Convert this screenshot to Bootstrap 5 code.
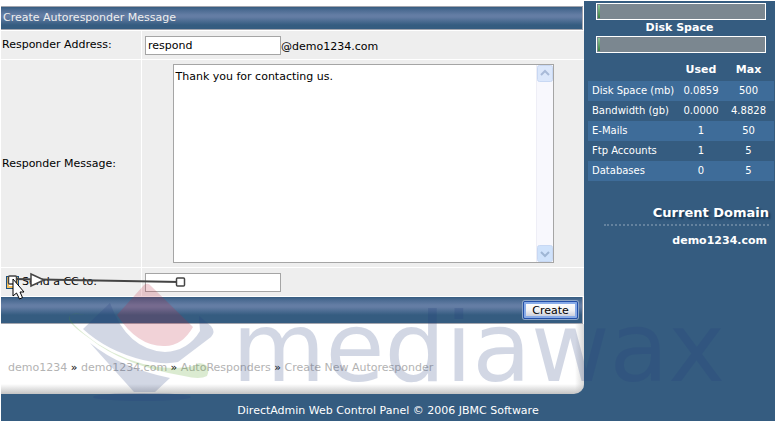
<!DOCTYPE html>
<html lang="en">
<head>
<meta charset="utf-8">
<meta name="viewport" content="width=device-width, initial-scale=1">
<title>Create Autoresponder Message</title>
<link href="https://cdn.jsdelivr.net/npm/bootstrap@5.3.0/dist/css/bootstrap.min.css" rel="stylesheet">
<style>
body{font:11px/14px "DejaVu Sans",Verdana,sans-serif;color:#000;background:#fff}
.page-shell{background:#355c80;min-height:calc(100vh - 2px);margin:1px;overflow:hidden}
.main-pane{background:linear-gradient(to top,#c4c4c4,#fff 10px);border-bottom-right-radius:10px;padding-top:5px}
.crumb-pane{height:70px;padding-left:7px;padding-top:18px;border-bottom-right-radius:10px;background:linear-gradient(to left,rgba(190,190,190,.6),rgba(255,255,255,0) 9px)}
.bar{background:linear-gradient(#355c80,#4b6b92 3px,#647da4 8px,#647da4 10px,#355c80 18px);border:solid #a3a5ae;border-width:0 1px 1px 0;margin-right:1px}
.bar-title{height:24px;border-top-width:1px;color:#eee;padding:0 2px}
.bar-actions{height:27px;padding-right:4px}
.form-rows{display:grid;grid-template-columns:140px 1fr;gap:1px;padding:1px 0;background:#fff}
.form-rows>div{background:#eee;padding:0 3px}
.form-rows>div:nth-child(odd){padding-left:1px}
.r-short{min-height:28px}
.field{width:136px;height:19px;border:1px solid #a5a5a5;padding:0 2px;font-size:11px;line-height:14px;background:#fff}
.msg{width:381px;height:199px;border:1px solid #a5a5a5;background:#fff}
.msg textarea{border:0;resize:none;outline:0;padding:5px 2px;font-size:11px;line-height:14px;overflow:hidden}
.scroll{width:17px;background:#f8f8fd;border-left:1px solid #eeeef6}
.cc-box{appearance:none;width:13px;height:13px;border:1px solid #1c5180;background:#fff;box-shadow:inset 0 0 0 2px #f4c05e;margin:0 3px 0 4px}
.create-btn{width:55px;height:18px;padding:0;font-size:11px;line-height:13px;color:#000;border:1px solid #2450a8;border-radius:2px;background:linear-gradient(#fff,#f3f3f5 8px,#c1c5d5);box-shadow:inset 0 0 0 2px #88abe8,0 0 0 1px #8ea6c6}
.crumb-pane a{color:#b3b3b3;text-decoration:none}
.side{width:191px;color:#fff;padding-top:2px}
.meter-box{height:17px;border:1px solid #fff;background:#7b8790;margin:0 9px 0 12px;padding:1px}
.meter-box div{height:100%;width:2px;background:linear-gradient(#8fc59a,#3c8243)}
.meter-name{line-height:16px}
.stats{width:calc(100% - 5px);margin:6px 1px 0 4px;font-size:10px;table-layout:fixed}
.stats th,.stats td{height:20px;padding:0;text-align:center;white-space:nowrap;color:#fff}
.stats thead th{font-size:11px;height:22px}
.stats tbody th{font-weight:400;text-align:left;padding-left:4px}
.stats tbody tr:nth-child(odd){background:#3e6c99}
.c-label{width:91px}.c-used{width:44px}
.dom-title{font-size:13px;line-height:18px;text-shadow:2px 2px 2px #173550;border-bottom:2px dotted #64829e;margin:23px 6px 0 20px;padding-bottom:2px}
.foot{color:#fff;height:27px;padding-top:10px}
.overlay{left:0;top:0;pointer-events:none}
</style>
<script src="https://cdn.jsdelivr.net/npm/bootstrap@5.3.0/dist/js/bootstrap.bundle.min.js"></script>
</head>
<body>
<div class="page-shell position-relative">
  <div class="d-flex align-items-start">
    <main class="main-pane flex-grow-1">
      <form>
        <div class="bar bar-title d-flex align-items-center">Create Autoresponder Message</div>
        <div class="form-rows">
          <div class="r-short d-flex align-items-center"><label for="addr">Responder Address:</label></div>
          <div class="r-short d-flex align-items-center"><input class="field" id="addr" type="text" value="respond"><span class="pt-1">@demo1234.com</span></div>
          <div class="d-flex align-items-center"><label for="msg">Responder Message:</label></div>
          <div class="d-flex justify-content-center py-1">
            <div class="msg d-flex">
              <textarea id="msg" class="flex-grow-1">Thank you for contacting us.</textarea>
              <div class="scroll d-flex flex-column justify-content-between">
                <svg width="16" height="17" viewBox="0 0 16 17"><rect x=".5" y=".5" width="15" height="16" rx="2" fill="#dbe7fb" stroke="#c8d8f3"/><path d="M4 10l4-4 4 4" fill="none" stroke="#a8bad8" stroke-width="2"/></svg>
                <svg width="16" height="17" viewBox="0 0 16 17"><rect x=".5" y=".5" width="15" height="16" rx="2" fill="#cfe2fb" stroke="#c8d8f3"/><path d="M4 7l4 4 4-4" fill="none" stroke="#9fb6d4" stroke-width="2"/></svg>
              </div>
            </div>
          </div>
          <div class="r-short d-flex align-items-center"><input type="checkbox" class="cc-box" id="cc"><label for="cc">Send a CC to:</label></div>
          <div class="r-short d-flex align-items-center"><input class="field" type="text" aria-label="CC address"></div>
        </div>
        <div class="bar bar-actions d-flex align-items-center justify-content-end"><button type="submit" class="create-btn">Create</button></div>
      </form>
      <nav class="crumb-pane d-flex align-items-center" aria-label="Breadcrumb"><div><a href="#">demo1234</a> » <a href="#">demo1234.com</a> » <a href="#">AutoResponders</a> » <a href="#">Create New Autoresponder</a></div></nav>
    </main>
    <aside class="side flex-shrink-0">
      <div class="meter-box"><div></div></div>
      <div class="meter-name text-center fw-bold">Disk Space</div>
      <div class="meter-box"><div></div></div>
      <table class="stats">
        <colgroup><col class="c-label"><col class="c-used"><col></colgroup>
        <thead><tr><td></td><th>Used</th><th>Max</th></tr></thead>
        <tbody>
          <tr><th>Disk Space (mb)</th><td>0.0859</td><td>500</td></tr>
          <tr><th>Bandwidth (gb)</th><td>0.0000</td><td>4.8828</td></tr>
          <tr><th>E-Mails</th><td>1</td><td>50</td></tr>
          <tr><th>Ftp Accounts</th><td>1</td><td>5</td></tr>
          <tr><th>Databases</th><td>0</td><td>5</td></tr>
        </tbody>
      </table>
      <div class="dom-title text-end fw-bold">Current Domain</div>
      <div class="text-end fw-bold pt-2 pe-2">demo1234.com</div>
    </aside>
  </div>
  <footer class="foot text-center">DirectAdmin Web Control Panel © 2006 JBMC Software</footer>
  <svg class="overlay position-absolute" width="775" height="420" viewBox="1 1 775 420" aria-hidden="true">
    <g opacity=".2">
      <path fill="#be233c" d="M144 285Q148 282 151 286L193 327Q182 346 165 346Q138 347 117 315Z"/>
      <path fill="#233c7d" d="M110 303L83 329Q107 351 143 360Q163 365 178 362L211 337Q216 332 211 326L199 316L200 331Q188 351 165 352Q127 350 110 303Z"/>
      <path fill="#233c7d" d="M90 343Q121 368 170 378L155 392H134Z"/>
      <ellipse cx="142" cy="397" rx="49" ry="4" fill="#233c7d"/>
      <path fill="#50a01e" d="M86 315Q67 312 70 319Q74 327 98 344Q126 362 158 367Q190 370 199 363Q212 364 207 376Q200 380 184 376Q124 366 89 338Q67 323 69 317Q72 311 86 315Z"/>
      <text x="232" y="381" font-family="DejaVu Sans, sans-serif" font-size="96" fill="#233c7d">mediawax</text>
    </g>
    <path d="M13 279L180 282" stroke="#444" stroke-width="2"/>
    <g fill="#fff" stroke="#444" stroke-width="1.5"><path d="M31 274V286L44 280Z"/><rect x="8.500" y="276" width="8" height="8" rx="1"/><rect x="176.500" y="278" width="8" height="8" rx="1"/></g>
    <path d="M13 279V296L16.500 293L19.500 299L22.500 297.500L20 292H24Z" fill="#fff" stroke="#000"/>
  </svg>
</div>
</body>
</html>
